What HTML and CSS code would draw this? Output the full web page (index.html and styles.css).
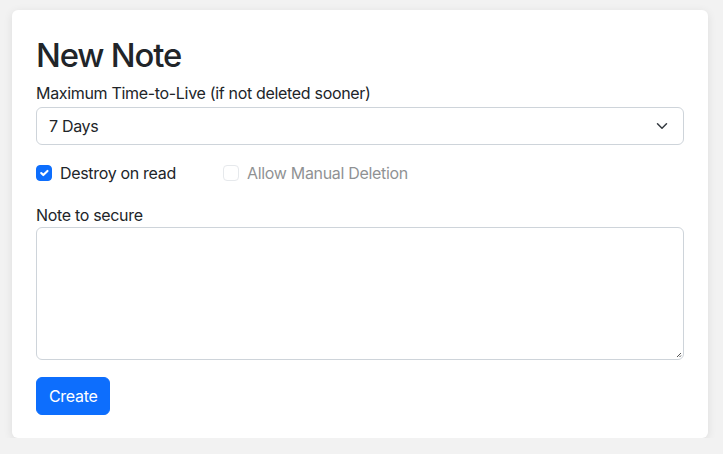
FILE: index.html
```html
<!DOCTYPE html>
<html lang="en">
<head>
<meta charset="utf-8">
<link rel="stylesheet" href="styles.css">
</head>
<body>
<div class="card">
  <h1 class="title">New Note</h1>
  <label class="label label-ttl">Maximum Time-to-Live (if not deleted sooner)</label>
  <div class="select">
    <span>7 Days</span>
    <svg class="chev" width="16" height="16" viewBox="0 0 16 16"><path d="M2 5l6 6 6-6" fill="none" stroke="#343a40" stroke-width="2" stroke-linecap="round" stroke-linejoin="round"/></svg>
  </div>
  <div class="checks">
    <div class="check first">
      <span class="box checked"><svg width="16" height="16" viewBox="0 0 20 20"><path d="M6 10l3 3 6-6" fill="none" stroke="#fff" stroke-width="3" stroke-linecap="round" stroke-linejoin="round"/></svg></span>
      <span class="check-label">Destroy on read</span>
    </div>
    <div class="check disabled">
      <span class="box"></span>
      <span class="check-label">Allow Manual Deletion</span>
    </div>
  </div>
  <label class="label label-note">Note to secure</label>
  <div class="textarea">
    <svg class="grip" width="6" height="6" viewBox="0 0 6 6"><path d="M5 1L1 5M5 3.5L3.5 5" stroke="#555" stroke-width="1"/></svg>
  </div>
  <button class="btn">Create</button>
</div>
</body>
</html>
```
FILE: styles.css
```css
* { box-sizing: border-box; }
html, body { margin: 0; padding: 0; }
body {
  background: #f2f2f2;
  font-family: Inter, "Noto Sans", "Liberation Sans", sans-serif;
  letter-spacing: -0.02em;
  color: #212529;
  font-size: 16px;
  line-height: 24px;
  padding: 10px 15px 0 12px;
}
.card {
  background: #fff;
  border-radius: 6px;
  box-shadow: 0 2px 10px rgba(0,0,0,0.09);
  padding: 24px 24px 23px 24px;
  width: 696px;
  display: flex;
  flex-direction: column;
  align-items: flex-start;
}
.card > * { flex: none; }
.title {
  margin: 0 0 6px 0;
  padding-top: 2px;
  font-size: 32.8px;
  line-height: 39px;
  font-weight: 500;
  letter-spacing: -0.035em;
}
.label { display: block; }
.label-ttl { margin-bottom: 2px; }
.select {
  width: 648px;
  height: 38px;
  border: 1px solid #ced4da;
  border-radius: 6px;
  padding: 0 12px;
  display: flex;
  align-items: center;
  justify-content: space-between;
}
.chev { width: 12px; height: 12px; margin-right: 3px; }
.checks {
  display: flex;
  margin-top: 16px;
  margin-bottom: 18px;
}
.check {
  display: flex;
  align-items: center;
  gap: 8px;
  white-space: nowrap;
}
.check.first { width: 187px; }
.box {
  width: 16px;
  height: 16px;
  border: 1px solid #ced4da;
  border-radius: 4px;
  display: flex;
  align-items: center;
  justify-content: center;
  flex: none;
}
.box.checked {
  background: #0d6efd;
  border-color: #0d6efd;
}
.disabled { opacity: 0.5; }
.label-note { margin-bottom: 0; }
.textarea {
  width: 648px;
  height: 133px;
  border: 1px solid #ced4da;
  border-radius: 6px;
  position: relative;
}
.grip { position: absolute; right: 1px; bottom: 1px; }
.btn {
  margin-top: 17px;
  background: #0d6efd;
  color: #fff;
  border: 1px solid #0d6efd;
  border-radius: 6px;
  font: inherit;
  letter-spacing: inherit;
  height: 38px;
  padding: 0 12px;
}
```
